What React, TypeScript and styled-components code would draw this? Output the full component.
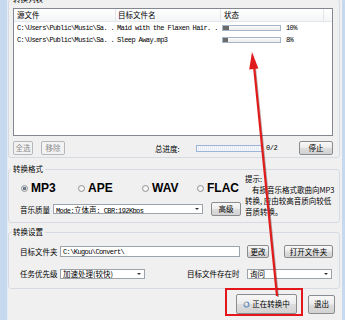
import React from "react";
import styled, { createGlobalStyle } from "styled-components";

const CJK = `"Noto Sans CJK SC", "Noto Sans", sans-serif`;
const MONO = `"Liberation Mono", "Noto Sans CJK SC", monospace`;

const Global = createGlobalStyle`
  html, body { margin: 0; padding: 0; background: #f0f0f0; }
  body { font-family: ${CJK}; }
`;

const Window = styled.div`
  position: relative;
  width: 345px;
  height: 320px;
  overflow: hidden;
  display: flex;
  background: #f0f0f0;
  font-family: ${CJK};
  font-size: 7.5px;
  color: #000;
`;

const SideStrip = styled.div<{ $w: number }>`
  flex: 0 0 ${(p) => p.$w}px;
  box-sizing: border-box;
  background: #c6d9ee;
  border-right: 1px solid #e2ecf7;
`;

const RightStrip = styled.div`
  flex: 0 0 3px;
  background: #c6d9ee;
`;

const Main = styled.div`
  flex: 1;
  min-width: 0;
  display: flex;
  flex-direction: column;
  padding-right: 2px;
`;

const Group = styled.fieldset<{ $mt: number }>`
  margin: ${(p) => p.$mt}px 0 0 0;
  padding: 0;
  border: 1px solid #d5dbe1;
  border-radius: 3px;
  min-width: 0;
`;

const Legend = styled.legend`
  margin-left: 2px;
  padding: 0 2px;
  font-size: 7.5px;
  line-height: 8px;
  color: #000;
`;

const GroupBody = styled.div<{ $p: string }>`
  padding: ${(p) => p.$p};
`;

/* ---------- file list ---------- */
const List = styled.div`
  height: 128px;
  box-sizing: border-box;
  border: 1px solid #828790;
  background: #fff;
  display: flex;
  flex-direction: column;
`;

const ListHeader = styled.div`
  display: flex;
  height: 13px;
  box-sizing: border-box;
  border-bottom: 1px solid #e3e6ea;
  background: linear-gradient(#ffffff, #f4f5f6);
`;

const HeadCell = styled.div<{ $w: number; $pl: number }>`
  flex: 0 0 ${(p) => p.$w}px;
  box-sizing: border-box;
  border-right: 1px solid #e3e6ea;
  padding-left: ${(p) => p.$pl}px;
  line-height: 12px;
  font-size: 7.5px;
`;

const Row = styled.div`
  display: flex;
  height: 12px;
  align-items: center;
`;

const Cell = styled.div<{ $w: number; $pl: number }>`
  flex: 0 0 ${(p) => p.$w}px;
  box-sizing: border-box;
  padding-left: ${(p) => p.$pl}px;
  display: flex;
  align-items: center;
  overflow: hidden;
  white-space: nowrap;
  font-family: ${MONO};
  font-size: 7px;
  letter-spacing: -0.6px;
  line-height: 12px;
`;

const RowBar = styled.div`
  width: 59px;
  height: 6px;
  box-sizing: border-box;
  border: 1px solid #a7b7c9;
  background: linear-gradient(#fbfbfb, #ececec);
  padding: 0;
  flex: none;
`;

const RowFill = styled.div`
  height: 100%;
  background: #6b6b6b;
`;

const Pct = styled.span`
  margin-left: 5px;
`;

/* ---------- buttons ---------- */
const Btn = styled.button<{ $w: number; $h: number; $disabled?: boolean }>`
  width: ${(p) => p.$w}px;
  height: ${(p) => p.$h}px;
  box-sizing: border-box;
  margin: 0;
  padding: 0;
  flex: none;
  border: 1px solid ${(p) => (p.$disabled ? "#b4b8bc" : "#8a8c8f")};
  border-radius: 2px;
  background: ${(p) =>
    p.$disabled
      ? "#f3f3f3"
      : "linear-gradient(#f8f8f8, #ececec 48%, #dddddd 52%, #d2d2d2)"};
  color: ${(p) => (p.$disabled ? "#8c8c8c" : "#000")};
  font-family: ${CJK};
  font-size: 7.5px;
  line-height: 1;
  display: flex;
  align-items: center;
  justify-content: center;
  gap: 2px;
`;

const ToolRow = styled.div`
  display: flex;
  align-items: center;
  margin-top: 5px;
  height: 14px;
  gap: 8px;
`;

const TotalLabel = styled.span`
  margin-left: 82px;
  width: 38px;
  flex: none;
`;

const TotalBar = styled.div`
  width: 67px;
  height: 7px;
  box-sizing: border-box;
  border: 1px solid #9bb5d6;
  background: repeating-linear-gradient(90deg, #f4f7fb 0 1px, #e8edf4 1px 2px);
  flex: none;
  margin-left: -5px;
`;

const TotalText = styled.span`
  margin-left: -5px;
  font-family: ${MONO};
  font-size: 7px;
  letter-spacing: -0.4px;
`;

const Spacer = styled.div`
  flex: 1;
`;

/* ---------- format group ---------- */
const FormatBody = styled.div`
  display: grid;
  grid-template-columns: 225px 88px;
  padding: 0 6px 5px 11px;
`;

const LeftCol = styled.div`
  display: flex;
  flex-direction: column;
  padding-top: 8px;
`;

const RadioRow = styled.div`
  display: grid;
  grid-template-columns: 57px 64px 55px auto;
  height: 14px;
  align-items: center;
  padding-left: 1px;
`;

const RadioItem = styled.label`
  display: flex;
  align-items: center;
  gap: 3px;
  font-family: "Liberation Sans", Arial, sans-serif;
  font-weight: bold;
  font-size: 12px;
  line-height: 14px;
  color: #000;
`;

const RadioDot = styled.span<{ $on?: boolean }>`
  width: 7px;
  height: 7px;
  box-sizing: border-box;
  border-radius: 50%;
  border: 1px solid #959595;
  flex: none;
  background: ${(p) =>
    p.$on
      ? "radial-gradient(circle, #6c7a88 0 1.4px, #dfe3e8 1.9px, #f7f7f7)"
      : "radial-gradient(circle, #ffffff, #e6e6e6)"};
`;

const QualityRow = styled.div`
  display: flex;
  align-items: center;
  height: 14px;
  margin-top: 7px;
`;

const FieldLabel = styled.span<{ $w: number; $ml?: number }>`
  width: ${(p) => p.$w}px;
  margin-left: ${(p) => p.$ml ?? 0}px;
  flex: none;
  white-space: nowrap;
  font-size: 7.5px;
`;

const SelectBox = styled.div<{ $w: number; $h: number }>`
  width: ${(p) => p.$w}px;
  height: ${(p) => p.$h}px;
  box-sizing: border-box;
  border: 1px solid #9da3ab;
  background: #fff;
  display: flex;
  align-items: center;
  padding-left: 2px;
  flex: none;
  overflow: hidden;
  white-space: nowrap;
`;

const MonoText = styled.span`
  font-family: ${MONO};
  font-size: 7px;
  letter-spacing: -0.6px;
`;

const CjkText = styled.span`
  font-family: ${CJK};
  font-size: 7.5px;
  letter-spacing: 0;
`;

const DropArrow = styled.span`
  margin-left: auto;
  margin-right: 3px;
  width: 0;
  height: 0;
  border-left: 2px solid transparent;
  border-right: 2px solid transparent;
  border-top: 2px solid #333;
  flex: none;
`;

const Hint = styled.div`
  display: flex;
  flex-direction: column;
  font-size: 7.5px;
  line-height: 11px;
  white-space: nowrap;
`;

const HintLine = styled.span<{ $indent?: number }>`
  padding-left: ${(p) => p.$indent ?? 0}px;
`;

/* ---------- settings group ---------- */
const SettingsBody = styled.div`
  display: flex;
  flex-direction: column;
  padding: 9px 6px 9px 11px;
`;

const SetRow = styled.div<{ $h: number; $mt?: number }>`
  display: flex;
  align-items: center;
  height: ${(p) => p.$h}px;
  margin-top: ${(p) => p.$mt ?? 0}px;
`;

/* ---------- footer ---------- */
const Footer = styled.div`
  display: flex;
  justify-content: flex-end;
  align-items: center;
  gap: 11px;
  margin-top: 5px;
  padding-right: 5px;
`;

/* ---------- annotations ---------- */
const Highlight = styled.div`
  position: absolute;
  left: 225px;
  top: 288px;
  width: 78px;
  height: 28px;
  box-sizing: border-box;
  border: 2px solid #e3161c;
  pointer-events: none;
`;

const ArrowLayer = styled.svg`
  position: absolute;
  left: 0;
  top: 0;
  pointer-events: none;
`;

const Spinner = () => (
  <svg width="7" height="7" viewBox="0 0 8 8">
    <path d="M4 1.2 A2.8 2.8 0 1 1 1.2 4" fill="none" stroke="#5b8cc0" strokeWidth="1.3" />
    <path d="M1.2 4 A2.8 2.8 0 0 1 4 1.2" fill="none" stroke="#a9a9a9" strokeWidth="1.3" />
  </svg>
);

const files = [
  { src: "C:\\Users\\Public\\Music\\Sa. .", dst: "Maid with the Flaxen Hair. .", pct: 10 },
  { src: "C:\\Users\\Public\\Music\\Sa. .", dst: "Sleep Away.mp3", pct: 8 },
];

export default function App() {
  return (
    <Window>
      <Global />
      <SideStrip $w={8} />
      <Main>
        <Group $mt={-5}>
          <Legend>转换列表</Legend>
          <GroupBody $p="5px 6px 2px 4px">
            <List>
              <ListHeader>
                <HeadCell $w={102} $pl={3}>源文件</HeadCell>
                <HeadCell $w={105} $pl={2}>目标文件名</HeadCell>
                <HeadCell $w={103} $pl={3}>状态</HeadCell>
              </ListHeader>
              {files.map((f, i) => (
                <Row key={i}>
                  <Cell $w={102} $pl={3}>{f.src}</Cell>
                  <Cell $w={105} $pl={1}>{f.dst}</Cell>
                  <Cell $w={103} $pl={1}>
                    <RowBar>
                      <RowFill style={{ width: `${f.pct}%` }} />
                    </RowBar>
                    <Pct>{f.pct}%</Pct>
                  </Cell>
                </Row>
              ))}
            </List>
            <ToolRow>
              <Btn $w={20} $h={14} $disabled>全选</Btn>
              <Btn $w={24} $h={14} $disabled>移除</Btn>
              <TotalLabel>总进度:</TotalLabel>
              <TotalBar />
              <TotalText>0/2</TotalText>
              <Spacer />
              <Btn $w={34} $h={14}>停止</Btn>
            </ToolRow>
          </GroupBody>
        </Group>

        <Group $mt={7}>
          <Legend>转换格式</Legend>
          <FormatBody>
            <LeftCol>
              <RadioRow>
                <RadioItem><RadioDot $on />MP3</RadioItem>
                <RadioItem><RadioDot />APE</RadioItem>
                <RadioItem><RadioDot />WAV</RadioItem>
                <RadioItem><RadioDot />FLAC</RadioItem>
              </RadioRow>
              <QualityRow>
                <FieldLabel $w={33}>音乐质量</FieldLabel>
                <SelectBox $w={150} $h={10}>
                  <MonoText>Mode:<CjkText>立体声</CjkText>; CBR:192Kbps</MonoText>
                  <DropArrow />
                </SelectBox>
                <Btn $w={30} $h={14} style={{ marginLeft: 8 }}>高级</Btn>
              </QualityRow>
            </LeftCol>
            <Hint>
              <HintLine>提示:</HintLine>
              <HintLine $indent={7}>有损音乐格式歌曲向MP3</HintLine>
              <HintLine>转换, 应由较高音质向较低</HintLine>
              <HintLine>音质转换。</HintLine>
            </Hint>
          </FormatBody>
        </Group>

        <Group $mt={5}>
          <Legend>转换设置</Legend>
          <SettingsBody>
            <SetRow $h={13}>
              <FieldLabel $w={40}>目标文件夹</FieldLabel>
              <SelectBox $w={180} $h={11}>
                <MonoText>C:\Kugou\Convert\</MonoText>
              </SelectBox>
              <Btn $w={22} $h={13} style={{ marginLeft: 7 }}>更改</Btn>
              <Btn $w={49} $h={13} style={{ marginLeft: 15 }}>打开文件夹</Btn>
            </SetRow>
            <SetRow $h={11} $mt={10}>
              <FieldLabel $w={40}>任务优先级</FieldLabel>
              <SelectBox $w={85} $h={10}>
                <CjkText>加速处理(较快)</CjkText>
                <DropArrow />
              </SelectBox>
              <FieldLabel $w={60} $ml={42}>目标文件存在时</FieldLabel>
              <SelectBox $w={85} $h={10}>
                <CjkText>询问</CjkText>
                <DropArrow />
              </SelectBox>
            </SetRow>
          </SettingsBody>
        </Group>

        <Footer>
          <Btn $w={61} $h={20}>
            <Spinner />
            正在转换中
          </Btn>
          <Btn $w={27} $h={19}>退出</Btn>
        </Footer>
      </Main>
      <RightStrip />

      <Highlight />
      <ArrowLayer width="345" height="320" viewBox="0 0 345 320">
        <line x1="255" y1="67" x2="278" y2="297" stroke="#3a0a0a" strokeOpacity="0.35" strokeWidth="2" />
        <line x1="254" y1="66" x2="277" y2="296" stroke="#e01b1b" strokeWidth="2.2" />
        <polygon points="252,52 258.4,68.6 249.2,69.6" fill="#e01b1b" />
      </ArrowLayer>
    </Window>
  );
}
